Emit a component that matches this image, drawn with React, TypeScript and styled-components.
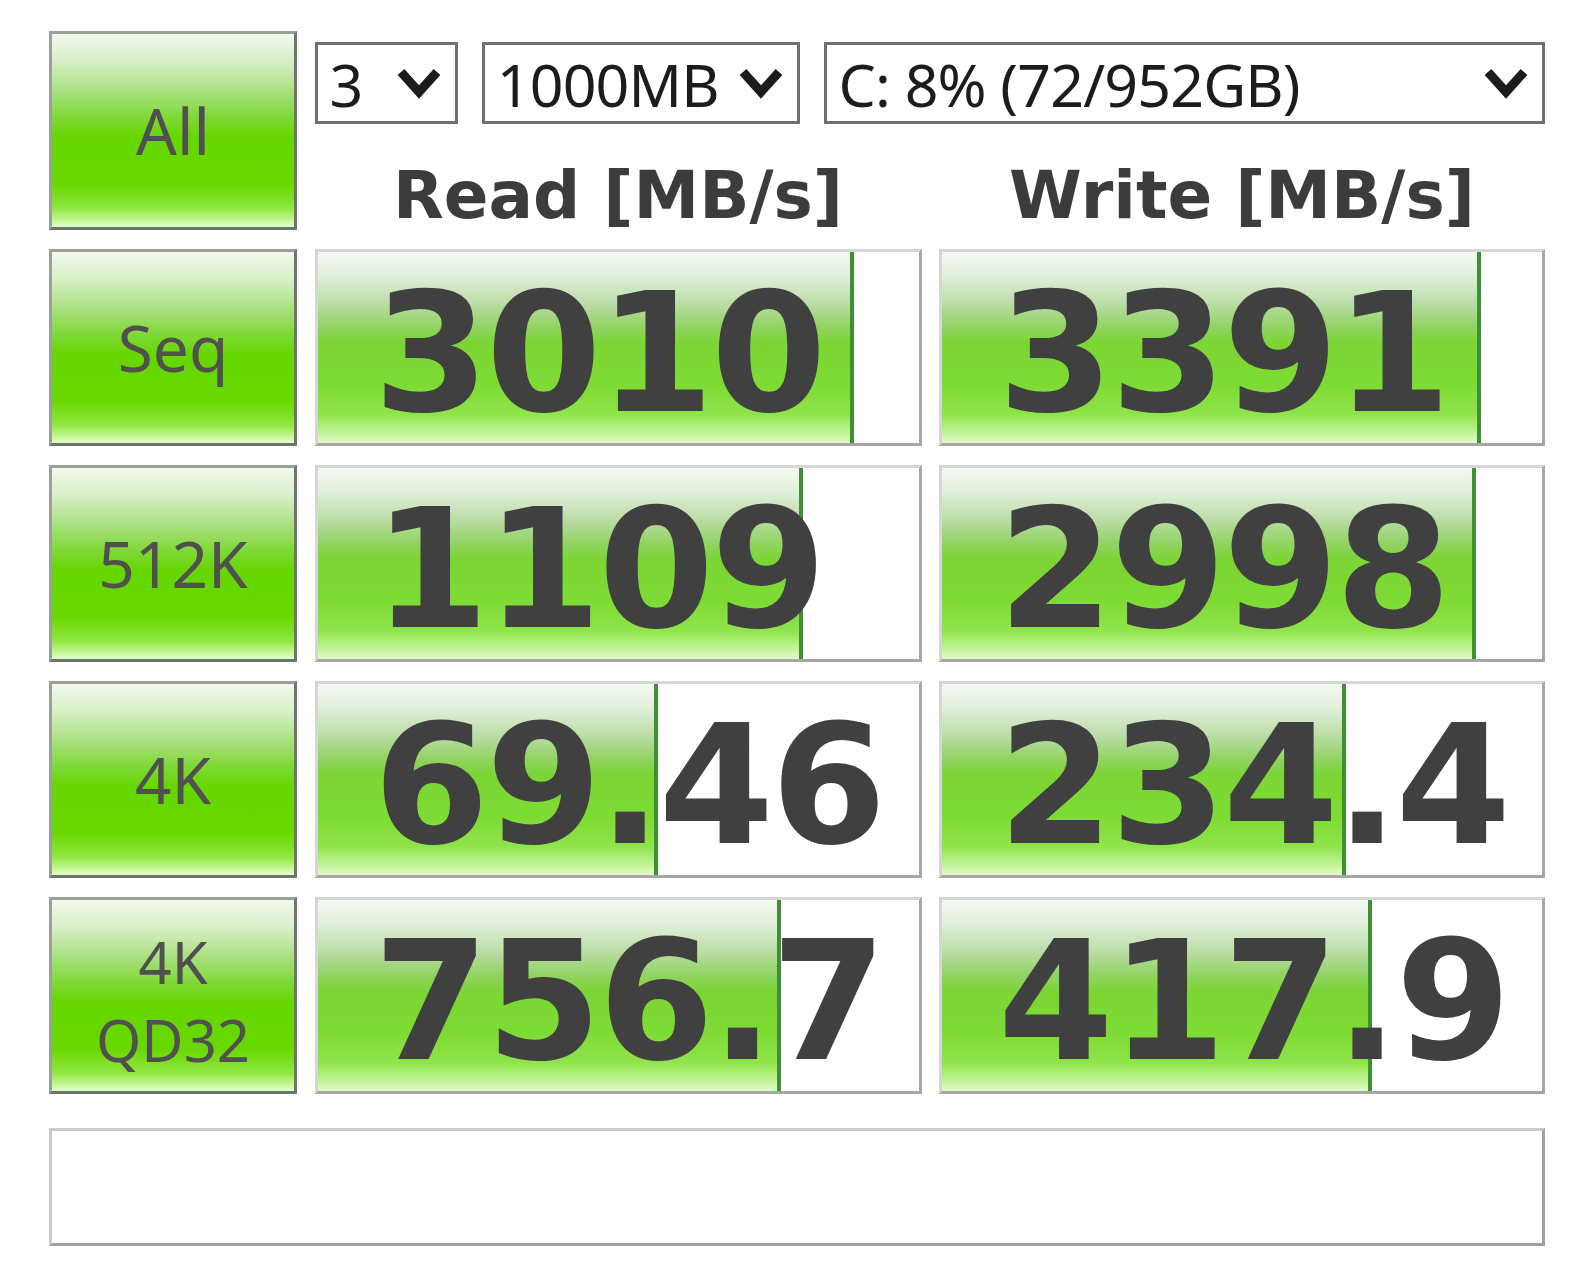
import { Fragment } from "react";
import styled, { createGlobalStyle } from "styled-components";

const GlobalStyle = createGlobalStyle`
  body {
    margin: 0;
    background: #ffffff;
  }
`;

const Page = styled.main`
  width: 1496px;
  padding: 31px 51px 21px 49px;
`;

const Board = styled.section`
  display: grid;
  grid-template-columns: 248px 607px 606px;
  grid-template-rows: 199px repeat(4, 197px);
  column-gap: 17.5px;
  row-gap: 19px;
`;

const TestButton = styled.button<{ $small?: boolean }>`
  display: flex;
  align-items: center;
  justify-content: center;
  box-sizing: border-box;
  margin: 0;
  padding: ${(p) => (p.$small ? "10px 0 0" : "0")};
  border: 3px solid;
  border-color: #9aa298 #6e766c #6e766c #9aa298;
  background: linear-gradient(
    to bottom,
    #f2f9ee 0%,
    #d8efc8 14%,
    #a9e07f 30%,
    #7dd832 44%,
    #66d600 54%,
    #68d800 78%,
    #8ee63e 90%,
    #c8f89c 97%,
    #e2fccb 100%
  );
  font-family: "Noto Sans", sans-serif;
  font-size: ${(p) => (p.$small ? "58px" : "64px")};
  line-height: 78px;
  color: #505050;
  text-align: center;
`;

const TopPanel = styled.div`
  grid-column: 2 / 4;
  display: flex;
  flex-direction: column;
  padding-top: 11px;
`;

const SelectRow = styled.div`
  display: flex;
  gap: 23.5px;
  height: 82px;
`;

const Select = styled.div<{ $w: number }>`
  display: flex;
  align-items: center;
  justify-content: space-between;
  box-sizing: border-box;
  width: ${(p) => p.$w}px;
  height: 82px;
  padding: 2px 14px 0 12px;
  border: 3px solid #707070;
  background: #ffffff;
  font-family: "Noto Sans", sans-serif;
  font-size: 59px;
  letter-spacing: -0.8px;
  color: #1c1c1c;
  white-space: nowrap;
`;

const HeaderRow = styled.div`
  flex: 1;
  display: grid;
  grid-template-columns: 607px 606px;
  column-gap: 17.5px;
  align-items: end;
  padding-bottom: 1px;
`;

const Heading = styled.h2`
  margin: 0;
  text-align: center;
  font-family: "DejaVu Sans", sans-serif;
  font-weight: bold;
  font-size: 66px;
  line-height: 1;
  color: #3c3c3c;
`;

const Cell = styled.div`
  display: grid;
  box-sizing: border-box;
  border: 3px solid;
  border-color: #d6d6d6 #a6a6a6 #a6a6a6 #d6d6d6;
  background: #ffffff;
`;

const Bar = styled.div`
  grid-area: 1 / 1;
  box-sizing: border-box;
  height: 100%;
  border-right: 4px solid #3f8f36;
  background: linear-gradient(
    to bottom,
    #f5faf3 0%,
    #e2f0dc 12%,
    #badda6 27%,
    #92d364 39%,
    #7bd534 48%,
    #7edb34 70%,
    #8fe44a 85%,
    #c4f49a 95%,
    #e2fbcd 100%
  );
`;

const Value = styled.span`
  grid-area: 1 / 1;
  align-self: center;
  margin-top: 12px;
  padding-left: 56px;
  font-family: "DejaVu Sans", sans-serif;
  font-weight: bold;
  font-size: 166px;
  letter-spacing: -3px;
  line-height: 1;
  color: #404040;
  white-space: nowrap;
`;

const StatusBar = styled.div`
  box-sizing: border-box;
  height: 118px;
  margin-top: 34px;
  border: 3px solid;
  border-color: #cacaca #a0a0a0 #a0a0a0 #cacaca;
  background: #ffffff;
`;

const Chevron = () => (
  <svg width="44" height="34" viewBox="0 0 44 34">
    <polyline
      points="4,5 22,25 40,5"
      fill="none"
      stroke="#1c1c1c"
      strokeWidth="9"
      strokeLinecap="butt"
      strokeLinejoin="miter"
    />
  </svg>
);

type Result = { label: string[]; read: string; readPct: number; write: string; writePct: number };

const results: Result[] = [
  { label: ["Seq"], read: "3010", readPct: 89.3, write: "3391", writePct: 89.8 },
  { label: ["512K"], read: "1109", readPct: 80.7, write: "2998", writePct: 89.0 },
  { label: ["4K"], read: "69.46", readPct: 56.7, write: "234.4", writePct: 67.3 },
  { label: ["4K", "QD32"], read: "756.7", readPct: 77.2, write: "417.9", writePct: 71.7 },
];

const ResultCell = ({ value, pct }: { value: string; pct: number }) => (
  <Cell>
    <Bar style={{ width: `${pct}%` }} />
    <Value>{value}</Value>
  </Cell>
);

const App = () => {
  return (
    <Page>
      <GlobalStyle />
      <Board>
        <TestButton>All</TestButton>
        <TopPanel>
          <SelectRow>
            <Select $w={144}>
              <span>3</span>
              <Chevron />
            </Select>
            <Select $w={319}>
              <span>1000MB</span>
              <Chevron />
            </Select>
            <Select $w={723}>
              <span>C: 8% (72/952GB)</span>
              <Chevron />
            </Select>
          </SelectRow>
          <HeaderRow>
            <Heading>Read [MB/s]</Heading>
            <Heading>Write [MB/s]</Heading>
          </HeaderRow>
        </TopPanel>
        {results.map((r) => (
          <Fragment key={r.label.join(" ")}>
            <TestButton $small={r.label.length > 1}>
              <span>
                {r.label.map((l, i) => (
                  <span key={l}>
                    {i > 0 && <br />}
                    {l}
                  </span>
                ))}
              </span>
            </TestButton>
            <ResultCell value={r.read} pct={r.readPct} />
            <ResultCell value={r.write} pct={r.writePct} />
          </Fragment>
        ))}
      </Board>
      <StatusBar />
    </Page>
  );
};

export default App;
